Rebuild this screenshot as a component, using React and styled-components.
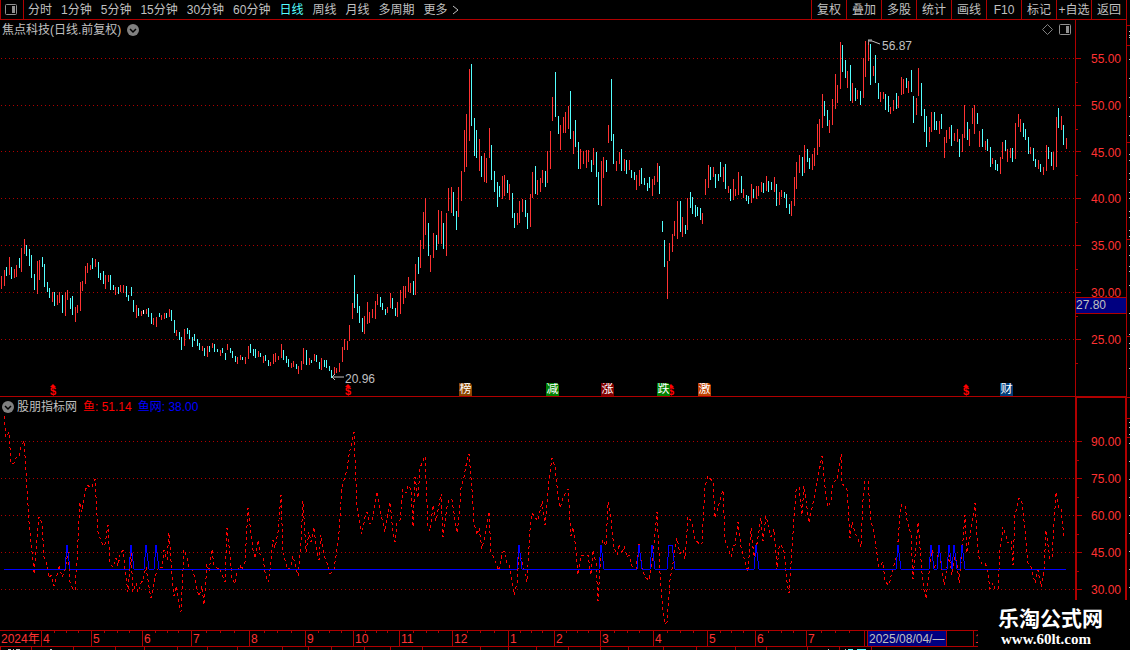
import React from "react";
import styled, { createGlobalStyle } from "styled-components";

const color = {
  line: "#b00000",
  up: "#ff3232",
  down: "#54ffff",
  flat: "#ffffff",
  text: "#c0c0c0",
  muted: "#808080",
  cursor: "#000080",
};

const GlobalStyle = createGlobalStyle`
  body {
    margin: 0;
    background: #000;
    color: ${color.text};
    font: 12px/16px "Liberation Sans", "Noto Sans CJK SC", sans-serif;
  }
  * { box-sizing: border-box; }
`;

/* ---------- data ---------- */

// Daily high/low bars: x, top, bottom, then r (up), c (down) or w (flat).
const BARS = `1 276 289r 4 270 286r 6 267 276c 9 257 275r 11 267 279c 14 269 278r 16 265 277r 19 258 268c 21 248 272r 24 239 254r
26 245 256c 29 249 266c 31 255 278c 34 274 290c 37 261 294r 39 260 280r 42 257 267c 44 264 287c 47 282 292c 49 288 298c
52 292 302r 54 292 306c 57 295 305r 59 292 303r 62 295 313c 65 292 316r 67 290 300r 70 298 309c 72 296 315c 75 307 322r
77 305 313r 80 282 311r 82 281 291r 85 266 284r 87 263 273r 90 265 270r 92 258 269c 95 259 267r 98 262 278c 100 273 280c
103 271 284c 105 275 289r 108 275 282r 110 275 290c 113 285 290c 115 287 295r 118 287 294c 120 285 292r 123 285 293r
126 286 297c 128 295 301c 131 287 296c 133 300 312c 136 305 318r 138 308 316c 141 311 316r 143 310 314w 146 309 314r
148 308 317c 151 313 324c 153 318 325r 156 317 327r 159 313 317c 161 315 320r 164 313 319r 166 313 318c 169 309 317r
171 310 321c 174 320 333c 176 330 336r 179 332 340c 181 337 350c 184 329 346r 187 328 334c 189 330 339c 192 337 347c
194 334 341c 197 339 346c 199 343 350c 202 346 351r 204 348 356c 207 346 357r 209 346 352c 212 343 348r 214 344 352c
217 349 352c 220 350 356r 222 348 353c 225 353 360c 227 344 350r 230 348 353c 232 351 358c 235 356 362c 237 357 364r
240 355 360r 242 357 360c 245 357 364r 248 346 359r 250 344 353c 253 349 356c 255 349 358c 258 351 357r 260 353 357c
263 356 363r 265 355 361c 268 360 366c 270 362 366r 273 354 364r 275 353 362r 278 356 360r 281 344 358r 283 350 360c
286 356 363c 288 359 367c 291 363 368r 293 361 367r 296 364 369c 298 366 374r 301 361 370r 303 348 364r 306 350 365c
309 358 365r 311 360 363c 314 354 361r 316 355 362c 319 362 369c 321 358 370r 324 360 367c 326 360 368c 329 366 371c
331 370 378c 334 367 375r 336 368 373r 339 363 372r 342 347 362r 344 339 350r 347 341 350r 349 325 341r 352 303 319r
354 275 308c 357 294 313c 359 306 323c 362 318 332c 364 316 334r 367 302 324r 369 312 323r 372 309 318r 375 301 319r
377 294 305r 380 297 307c 382 303 310c 385 309 315c 387 307 313r 390 293 308r 392 298 309c 395 308 316c 397 302 317r
400 290 314r 403 286 304r 405 286 298r 408 277 292r 410 283 293r 413 281 295c 415 264 295r 418 257 274c 420 240 268r
423 212 249r 425 198 235r 428 223 256c 430 255 272r 433 233 258r 436 235 250c 438 210 244r 441 211 244r 443 223 249c
446 213 256r 448 188 211r 451 187 213r 453 192 216c 456 211 230c 458 187 217r 461 171 201r 464 130 172r 466 114 167r
469 69 141r 471 64 126c 474 118 156c 476 130 158c 479 139 171r 481 156 177c 484 153 182r 486 158 183r 489 128 158r
491 145 180c 494 171 192c 497 182 207c 499 186 197c 502 176 199r 504 175 196r 507 180 193c 509 184 200r 512 193 218c
514 213 228c 517 213 225r 519 201 223r 522 199 212r 525 200 217c 527 213 229c 530 194 227r 532 172 198r 535 166 194c
537 180 195r 540 178 192r 542 170 183r 545 171 187c 547 151 183r 550 131 169r 552 97 121r 555 72 117c 558 116 134c
560 125 150r 563 117 133r 565 112 133r 568 106 129r 570 91 139c 573 131 154r 575 120 147c 578 142 169c 580 149 169r
583 151 164r 586 150 168r 588 150 162r 591 160 172c 593 148 165r 596 152 177c 598 172 205c 601 161 206r 603 157 178r
606 160 172c 608 125 143r 611 79 141c 613 134 164c 616 161 171r 619 152 164r 621 149 171c 624 159 171r 626 160 174c
629 160 170r 631 170 178c 634 172 180c 636 175 190r 639 170 186r 641 168 184c 644 178 185c 647 183 191c 649 177 188c
652 179 196r 654 176 185r 657 163 182r 659 166 194c 662 221 232c 664 240 267c 667 261 299r 669 243 261r 672 234 252r
674 221 236r 677 201 239r 680 201 232c 682 217 237r 685 225 234c 687 198 230r 690 192 208c 692 197 214c 695 205 217c
697 207 216c 700 208 220c 702 213 224r 705 179 195r 708 165 188r 710 167 180c 713 167 177r 715 174 188c 718 174 181c
720 162 177c 723 167 182r 725 164 189c 728 186 193r 730 189 201c 733 179 200r 735 189 196r 738 172 195r 741 176 193c
743 189 198r 746 195 201c 748 196 204c 751 184 203r 753 189 198c 756 186 199r 758 186 196r 761 182 192r 763 183 193c
766 176 191r 768 181 192c 771 182 190c 774 177 192r 776 184 206c 779 192 205r 781 190 197r 784 192 198c 786 194 208c
789 204 214c 791 201 216r 794 177 206r 796 162 189r 799 155 173r 802 157 176c 804 145 173r 807 149 162c 809 158 169c
812 154 170r 814 148 166r 817 124 155r 819 119 147r 822 94 128r 824 101 116c 827 110 126c 829 120 133r 832 99 125r
835 74 109r 837 85 103r 840 42 89r 842 45 72c 845 60 78c 847 71 88r 850 65 101c 852 83 103r 855 88 101c 857 90 99r
860 91 105c 863 58 98r 865 41 77r 868 42 61r 870 44 85c 873 66 76r 875 55 83c 878 83 99c 880 92 102r 883 92 99r
885 94 110c 888 96 112c 890 107 114r 893 100 111r 896 93 109c 898 96 108r 901 77 95r 903 79 94r 906 78 88c 908 81 93r
911 70 92c 913 96 123c 916 98 115r 918 68 96r 921 83 116c 924 109 132c 926 116 147c 929 127 142r 931 112 132r
934 112 130c 936 121 130c 939 121 134r 941 114 129c 944 137 158r 946 130 143r 949 127 139r 951 125 146c 954 133 141r
957 129 142r 959 139 157c 962 134 152r 964 105 138r 967 122 140c 969 129 146r 972 108 124r 974 105 134r 977 113 124c
979 131 147r 982 129 147c 985 141 150r 987 139 151c 990 147 167c 992 158 164r 995 160 170c 997 164 171c 1000 157 174r
1002 142 159r 1005 140 151c 1007 149 162r 1010 148 158r 1012 148 162c 1015 123 159r 1018 114 127r 1020 119 132r
1023 123 137c 1025 129 140c 1028 137 154c 1030 147 154r 1033 148 161c 1035 159 167c 1038 160 169r 1040 164 172c
1043 167 175r 1046 145 171r 1048 147 159c 1051 152 166c 1053 152 170r 1056 117 167r 1058 108 128c 1061 116 130r
1063 125 145c 1066 138 149r`;

const barPath = (kind) =>
  [...BARS.matchAll(/(\d+) (\d+) (\d+)([rcw])/g)]
    .filter((m) => m[4] === kind)
    .map(([, x, top, bottom]) => `M${x} ${top}h1V${bottom}h-1z`)
    .join("");

const FISH = `4,416 6,437 9,432 11,464 14,463 16,458 19,457 21,447 24,441 26,470 29,522 32,552 34,574 37,538 39,517 42,523 44,557
47,565 49,578 51,575 54,586 57,575 59,565 62,577 65,570 68,552 70,582 73,590 75,590 77,560 80,502 82,512 85,492 87,485 90,487
92,487 95,479 98,532 100,538 103,546 105,544 108,525 110,564 113,567 116,558 118,566 120,555 123,550 126,578 128,592 131,553
133,592 136,583 138,592 141,583 143,580 146,567 149,587 151,598 154,582 156,574 159,566 162,568 164,550 167,560 169,533
172,575 174,596 176,586 179,603 181,612 184,550 187,557 189,567 192,570 194,575 197,590 199,596 202,586 204,605 207,564
209,572 212,549 214,566 217,568 220,568 222,575 225,582 227,528 230,555 232,578 235,584 237,573 240,565 242,570 245,562
248,508 250,525 253,550 255,558 258,540 260,554 263,558 265,572 268,582 270,570 273,540 275,548 278,532 281,495 283,553
286,564 288,570 291,566 293,556 296,568 298,576 301,542 303,501 306,552 309,532 311,542 314,527 316,547 319,560 321,535
324,555 327,563 330,574 334,569 336,556 339,532 342,487 344,480 347,470 349,455 354,432 357,508 359,518 362,534 365,517
367,512 370,524 372,521 377,492 380,510 385,532 390,502 393,533 395,542 397,523 400,520 403,489 406,493 408,485 411,490
413,527 415,477 418,498 420,468 425,456 428,527 430,531 433,505 436,521 441,494 443,537 447,507 449,499 452,500 457,533
459,517 461,488 464,477 467,460 469,454 472,490 474,523 477,535 479,528 482,549 486,531 489,512 491,553 494,558 497,566
499,571 502,553 504,551 507,563 509,565 512,583 514,595 517,583 519,555 522,560 524,570 527,582 530,530 532,513 535,517
538,521 542,501 545,525 549,480 552,458 555,467 558,495 560,508 563,498 568,489 571,536 573,527 576,550 578,575 581,555
585,555 588,555 591,575 593,550 596,563 598,601 601,550 603,540 606,546 608,502 611,520 614,548 617,555 619,544 622,554
624,546 627,557 629,555 632,566 636,569 639,544 642,568 645,577 649,580 653,555 657,512 660,573 663,613 665,624 667,622
670,580 673,563 677,538 680,554 683,550 685,559 688,517 692,522 695,539 700,545 702,543 705,487 708,476 713,482 715,518
718,507 723,490 725,540 731,557 733,546 735,545 738,522 741,547 748,572 751,528 754,557 756,550 759,531 761,518 763,541
766,516 769,529 771,537 774,529 777,570 779,548 781,544 784,552 787,582 789,593 793,533 796,491 799,487 802,515 804,486
809,523 813,503 818,477 822,456 825,487 828,507 831,500 833,483 837,479 841,454 842,483 847,490 850,538 852,522 855,533
858,539 861,547 863,500 865,481 868,481 871,523 873,527 876,548 879,567 883,562 885,582 889,585 892,572 897,555 900,515
902,504 905,506 907,520 911,535 913,579 918,522 922,573 924,590 926,599 929,573 932,550 934,568 937,563 939,547 942,570
944,585 947,567 949,555 952,575 955,557 957,563 959,583 962,553 965,515 967,553 970,537 975,503 977,537 979,557 982,564
985,563 987,568 990,589 993,583 995,589 998,589 1000,550 1003,527 1005,533 1008,543 1011,540 1013,565 1015,515 1019,498
1022,503 1025,530 1028,563 1031,567 1035,583 1038,570 1041,587 1044,570 1046,530 1050,559 1052,557 1056,492 1059,508
1061,508 1064,538`;

const NET_SPIKES = [67, 131, 146, 156, 519, 601, 639, 652, [669, 672], 756, 898, 931, 939, 949, 954, 962];
const NET = [
  "4,569",
  ...NET_SPIKES.flatMap((s) => {
    const [a, b] = Array.isArray(s) ? s : [s, s];
    return [`${a - 2},569`, `${a},545`, `${b},545`, `${b + 3},569`];
  }),
  "1066,569",
].join(" ");

const PERIODS = ["分时", "1分钟", "5分钟", "15分钟", "30分钟", "60分钟", "日线", "周线", "月线", "多周期"];
const TOOLS = ["复权", "叠加", "多股", "统计", "画线", "F10", "标记", "+自选", "返回"];

const PRICE_LEVELS = [
  ["55.00", 58], ["50.00", 105], ["45.00", 151], ["40.00", 198], ["35.00", 245], ["30.00", 292], ["25.00", 339],
];
const FISH_LEVELS = [["90.00", 441], ["75.00", 478], ["60.00", 515], ["45.00", 552], ["30.00", 589]];

const EVENTS = [
  { x: 459, label: "榜", bg: "#8a4500" },
  { x: 546, label: "减", bg: "#008000" },
  { x: 601, label: "涨", bg: "#800000" },
  { x: 657, label: "跌", bg: "#008000" },
  { x: 698, label: "激", bg: "#c04000" },
  { x: 1000, label: "财", bg: "#003c78" },
];
const DIVIDENDS = [49, 344, 667, 962];

const MONTHS = [
  ["2024年", 41], ["4", 50], ["5", 51], ["6", 49], ["7", 58], ["8", 56], ["9", 48], ["10", 46], ["11", 53], ["12", 56],
  ["1", 46], ["2", 46], ["3", 53], ["4", 54], ["5", 48], ["6", 51], ["7", 58], ["8", 109], ["10", 153],
];
const CURSOR_MONTH = 17;

const FOOT_TICKS = [
  0, 31, 73, 115, 144, 177, 207, 237, 282, 308, 331, 364, 390, 422, 480, 508, 536, 568, 600, 628, 663, 696, 735, 766,
  807, 839, 871,
];

/* ---------- layout ---------- */

const Screen = styled.div`
  position: relative;
  display: flex;
  flex-direction: column;
  height: 100vh;
  min-height: 400px;
  overflow: hidden;
`;

const Body = styled.div`
  flex: 1;
  min-height: 0;
  display: grid;
  grid-template-columns: minmax(0, 1fr) 4px;
`;

const Main = styled.main`
  display: grid;
  min-height: 0;
  grid-template-rows: 20px minmax(0, 377fr) minmax(0, 233fr) 17px 3px;
`;

const Toolbar = styled.nav`
  display: flex;
  align-items: stretch;
  justify-content: space-between;
  border-bottom: 1px solid ${color.line};
`;

const Periods = styled.div`
  display: flex;
  align-items: center;
  gap: 9px;
`;

const Tools = styled.div`
  display: flex;
`;

const plainButton = `
  padding: 0;
  border: 0;
  background: none;
  font: inherit;
  white-space: nowrap;
  cursor: pointer;
`;

const PeriodButton = styled.button`
  ${plainButton}
  display: flex;
  align-items: center;
  gap: 4px;
  color: ${(p) => (p.$active ? color.down : color.text)};
`;

const SidebarButton = styled.button`
  ${plainButton}
  align-self: stretch;
  display: flex;
  align-items: center;
  width: 24px;
  margin-right: -5px;
  padding-left: 4px;
  border: solid ${color.line};
  border-width: 0 1px;
`;

const ToolButton = styled.button`
  ${plainButton}
  width: 35px;
  border-left: 1px solid ${color.line};
  color: ${color.text};
`;

const Row = styled.section`
  display: grid;
  min-height: 0;
  grid-template-columns: minmax(0, 1fr) 51px;
`;

const Pane = styled.div`
  position: relative;
  display: flex;
  flex-direction: column;
  min-height: 0;
  border-bottom: ${(p) => (p.$ruled ? `1px solid ${color.line}` : "0")};
`;

const PaneHeader = styled.header`
  display: flex;
  align-items: center;
  gap: ${(p) => p.$gap}px;
  height: 18px;
  padding: 1px 4px 0 2px;
  white-space: nowrap;
`;

const Title = styled.h1`
  margin: 0;
  font: inherit;
`;

const Reading = styled.span`
  margin-left: 3px;
  color: ${(p) => p.$color};
`;

const HeaderIcons = styled.div`
  display: flex;
  align-items: center;
  gap: 6px;
  margin-left: auto;
`;

const IconButton = styled.button`
  ${plainButton}
  display: flex;
`;

const Plot = styled.svg`
  display: block;
  flex: 1;
  width: 100%;
  min-height: 0;
  shape-rendering: crispEdges;
`;

const Axis = styled.aside`
  position: relative;
  display: flex;
  justify-content: space-between;
  min-height: 0;
  color: ${color.up};
  border: solid ${color.line};
  border-width: ${(p) => (p.$framed ? "1px 1px 0 2px" : "0 0 1px 1px")};
`;

const Ticks = styled.svg`
  width: 5px;
  height: 100%;
  shape-rendering: crispEdges;
`;

const Scale = styled.ul`
  display: flex;
  flex-direction: column;
  justify-content: space-between;
  margin: 0;
  padding: ${(p) => p.$pad};
  list-style: none;
`;

const CursorPrice = styled.div`
  position: absolute;
  top: 277px;
  left: 0;
  right: 0;
  height: 17px;
  line-height: 15px;
  color: ${color.text};
  background: ${color.cursor};
  border: solid ${color.line};
  border-width: 1px 0;
`;

const Mark = styled.div`
  position: absolute;
  display: flex;
  gap: ${(p) => (p.$high ? 0 : 1)}px;
  top: ${(p) => (p.$high ? "5%" : "94%")};
  line-height: ${(p) => (p.$high ? 14 : 12)}px;
`;

const Badge = styled.span`
  position: absolute;
  bottom: 0;
  width: 13px;
  height: 13px;
  overflow: hidden;
  font-size: 12px;
  line-height: 13px;
  text-align: center;
  color: #fff;
  background: ${(p) => p.$bg};
  clip-path: polygon(0 0, 11px 0, 13px 2px, 13px 100%, 0 100%);
`;

const Dividend = styled.span`
  position: absolute;
  bottom: 0;
  width: 8px;
  height: 12px;
  font-size: 11px;
  font-weight: bold;
  line-height: 15px;
  text-align: center;
  color: #f00;

  &::before {
    content: "";
    position: absolute;
    top: 0;
    left: 1px;
    border: solid transparent;
    border-width: 0 3px 3px;
    border-bottom-color: #f00;
  }
`;

const TimeAxis = styled.div`
  display: grid;
  grid-template-columns: ${MONTHS.map(([, days]) => `minmax(0, ${days}fr)`).join(" ")};
  overflow: hidden;
  border: solid ${color.line};
  border-width: 1px 0;
  color: ${color.up};
  line-height: 17px;
`;

const tick = `linear-gradient(${color.line}, ${color.line})`;

const Month = styled.div`
  display: flex;
  min-width: 0;
  height: 15px;
  padding-left: 1px;
  white-space: nowrap;
  border-left: ${(p) => (p.$first ? 0 : 1)}px solid ${color.line};
  background: ${(p) =>
    p.$first ? "none" : `${tick} 25% 0 / 1px 2px no-repeat, ${tick} 50% 0 / 1px 2px no-repeat, ${tick} 75% 0 / 1px 2px no-repeat`};
`;

const CursorDate = styled.time`
  margin-left: 1px;
  width: 80px;
  padding-left: 1px;
  overflow: hidden;
  color: ${color.text};
  background: ${color.cursor};
  border: solid ${color.line};
  border-width: 0 1px;
`;

const Foot = styled.svg`
  display: block;
  width: 100%;
  height: 3px;
  shape-rendering: crispEdges;
`;

const Edge = styled.svg`
  display: block;
  width: 4px;
  height: 100%;
  min-height: 0;
  shape-rendering: crispEdges;
`;

const Watermark = styled.div`
  position: absolute;
  right: 0;
  bottom: 0;
  width: 152px;
  height: 50px;
  padding: 8px 0 0 20px;
  background: #000;
  color: #fff;
  font-weight: bold;
  white-space: nowrap;
`;

const SiteName = styled.div`
  font-size: 21px;
  line-height: 22px;
`;

const SiteLink = styled.a`
  display: block;
  padding-left: 3px;
  color: inherit;
  text-decoration: none;
  font: bold 15px/19px "Liberation Serif", serif;
`;

/* ---------- pieces ---------- */

function CollapseIcon() {
  return (
    <svg width="12" height="12" viewBox="0 0 12 12">
      <circle cx="6" cy="6" r="6" fill={color.muted} />
      <path d="M3 5l3 3 3-3" fill="none" stroke="#000" strokeWidth="1.5" />
    </svg>
  );
}

function PanelIcon() {
  return (
    <svg width="12" height="11" viewBox="0 0 12 11">
      <rect x="0.5" y="0.5" width="11" height="10" rx="1" fill="none" stroke="#909090" />
      <rect x="7" y="2" width="3" height="7" fill="#909090" />
    </svg>
  );
}

function GridLines({ id, levels }) {
  return (
    <>
      <pattern id={id} x="1" y="0" width="4" height="1" patternUnits="userSpaceOnUse">
        <rect width="1" height="1" fill={color.line} />
      </pattern>
      {levels.map(([label, y]) => (
        <rect key={label} x="1" y={y} width="1074" height="1" fill={`url(#${id})`} />
      ))}
    </>
  );
}

function AxisTicks({ levels, top, height }) {
  const half = Math.round((levels[1][1] - levels[0][1]) / 2);
  return (
    <Ticks viewBox={`0 ${top} 5 ${height}`} preserveAspectRatio="none" fill={color.line}>
      {levels.map(([label, y]) => (
        <React.Fragment key={label}>
          <rect y={y} width="5" height="1" />
          <rect y={y + half} width="2" height="1" />
        </React.Fragment>
      ))}
    </Ticks>
  );
}

const atX = (x) => ({ left: `${(x / 1075) * 100}%` });

export default function App() {
  return (
    <Screen>
      <GlobalStyle />
      <Body>
        <Main>
          <Toolbar>
            <Periods>
              <SidebarButton aria-label="侧栏">
                <PanelIcon />
              </SidebarButton>
              {PERIODS.map((p) => (
                <PeriodButton key={p} $active={p === "日线"}>
                  {p}
                </PeriodButton>
              ))}
              <PeriodButton>
                更多
                <svg width="7" height="10" viewBox="0 0 7 10">
                  <path d="M1 1l5 4-5 4" fill="none" stroke={color.text} />
                </svg>
              </PeriodButton>
            </Periods>
            <Tools>
              {TOOLS.map((t) => (
                <ToolButton key={t}>{t}</ToolButton>
              ))}
            </Tools>
          </Toolbar>

          <Row>
            <Pane $ruled>
              <PaneHeader $gap={6}>
                <Title>焦点科技(日线.前复权)</Title>
                <IconButton aria-label="展开">
                  <CollapseIcon />
                </IconButton>
                <HeaderIcons>
                  <IconButton aria-label="标记点">
                    <svg width="11" height="11" viewBox="0 0 11 11">
                      <path d="M5.5 0.5l5 5-5 5-5-5z" fill="none" stroke={color.muted} />
                    </svg>
                  </IconButton>
                  <IconButton aria-label="面板">
                    <PanelIcon />
                  </IconButton>
                </HeaderIcons>
              </PaneHeader>
              <Plot viewBox="0 38 1075 358" preserveAspectRatio="none">
                <GridLines id="price-grid" levels={PRICE_LEVELS} />
                <path d={barPath("r")} fill={color.up} />
                <path d={barPath("c")} fill={color.down} />
                <path d={barPath("w")} fill={color.flat} />
              </Plot>
              <Mark $high style={atX(868)}>
                <svg width="14" height="8" viewBox="0 0 14 8">
                  <path d="M0 6V1h4M0 2h4l8 3" fill="none" stroke={color.text} />
                </svg>
                56.87
              </Mark>
              <Mark style={atX(331)}>
                <svg width="13" height="8" viewBox="0 0 13 8">
                  <path d="M4 1L1 4l3 3M1 4h12" fill="none" stroke={color.text} />
                </svg>
                20.96
              </Mark>
              {DIVIDENDS.map((x) => (
                <Dividend key={x} style={atX(x)}>
                  $
                </Dividend>
              ))}
              {EVENTS.map((e) => (
                <Badge key={e.x} $bg={e.bg} style={atX(e.x)}>
                  {e.label}
                </Badge>
              ))}
            </Pane>
            <Axis>
              <AxisTicks levels={PRICE_LEVELS} top={20} height={376} />
              <Scale $pad="31px 5px 48px 0">
                {PRICE_LEVELS.map(([l]) => (
                  <li key={l}>{l}</li>
                ))}
              </Scale>
              <CursorPrice>27.80</CursorPrice>
            </Axis>
          </Row>

          <Row>
            <Pane>
              <PaneHeader $gap={3}>
                <IconButton aria-label="展开指标">
                  <CollapseIcon />
                </IconButton>
                <span>股朋指标网</span>
                <Reading $color="#ff0000">鱼: 51.14</Reading>
                <Reading $color="#0000ff">鱼网: 38.00</Reading>
              </PaneHeader>
              <Plot viewBox="0 415 1075 215" preserveAspectRatio="none">
                <GridLines id="fish-grid" levels={FISH_LEVELS} />
                <polyline points={FISH} fill="none" stroke="#ff0000" strokeDasharray="3 3" />
                <polyline points={NET} fill="none" stroke="#0000ff" />
              </Plot>
            </Pane>
            <Axis $framed>
              <AxisTicks levels={FISH_LEVELS} top={398} height={232} />
              <Scale $pad="36px 4px 32px 0">
                {FISH_LEVELS.map(([l]) => (
                  <li key={l}>{l}</li>
                ))}
              </Scale>
            </Axis>
          </Row>

          <TimeAxis>
            {MONTHS.map(([label], i) => (
              <Month key={i} $first={i === 0}>
                {i === CURSOR_MONTH ? <CursorDate>2025/08/04/—</CursorDate> : label}
              </Month>
            ))}
          </TimeAxis>
          <Foot viewBox="0 0 1126 3" preserveAspectRatio="none">
            {FOOT_TICKS.map((x) => (
              <rect key={x} x={x} width="1" height="3" fill={color.line} />
            ))}
            <path d="M8 2h3v1h-3zM13 2h1v1h-1zM16 2h4v1h-4zM50 2h2v1h-2zM828 2h1v1h-1zM845 2h1v1h-1z" fill={color.text} />
            <path d="M848 2h5v1h-5zM857 2h9v1h-9z" fill={color.down} />
          </Foot>
        </Main>

        <Edge viewBox="0 0 4 650" preserveAspectRatio="none">
          <rect width="1" height="650" fill={color.line} />
          {[25, 45, 142, 239, 336, 397, 418, 437].map((y) => (
            <rect key={y} x="1" y={y} width="3" height="1" fill={color.line} />
          ))}
          {[
            31, 35, 37, 59, 78, 97, 116, 135, 154, 160, 173, 179, 192, 198, 211, 217, 230, 236, 245, 255, 266, 271, 285,
            313, 334, 343, 348, 368, 422, 427, 434, 443, 461, 479, 497, 515, 533, 551, 569, 587,
          ].map((y) => (
            <rect key={y} x="3" y={y} width="1" height="1" fill={color.text} />
          ))}
        </Edge>
      </Body>
      <Watermark>
        <SiteName>乐淘公式网</SiteName>
        <SiteLink href="http://www.60lt.com">www.60lt.com</SiteLink>
      </Watermark>
    </Screen>
  );
}
